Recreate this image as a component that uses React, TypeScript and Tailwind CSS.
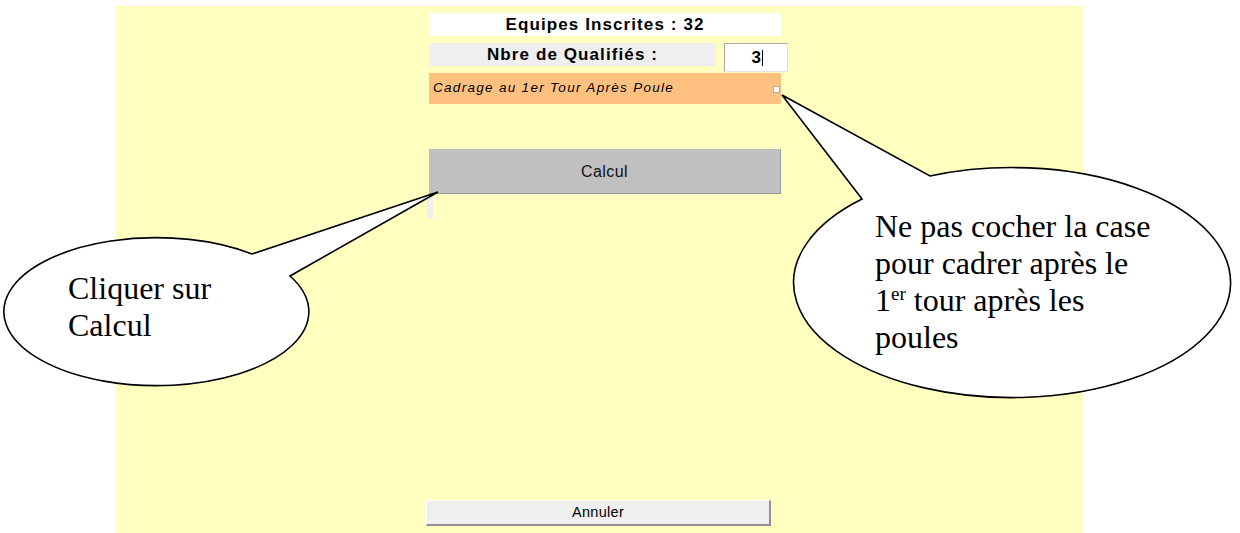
import React from "react";

const ui = { fontFamily: '"Liberation Sans", Arial, sans-serif' };
const serif = { fontFamily: '"Liberation Serif", "Times New Roman", serif' };

export default function App() {
  return (
    <div className="relative w-[1240px] h-[533px] bg-white overflow-hidden" style={ui}>
      <div className="ml-[115px] mt-[6px] w-[968px] h-[527px] bg-[#ffffc0] flex flex-col pl-[314px] pt-[7px] pb-[7px]">
        <div className="w-[352px] h-[23px] bg-white flex items-center justify-center text-[17px] font-bold tracking-[1.1px] text-black">
          Equipes Inscrites : 32
        </div>
        <div className="mt-[7px] flex items-start gap-[8px]">
          <div className="w-[287px] h-[23px] bg-[#efefef] flex items-center justify-center text-[17px] font-bold tracking-[1.1px] text-black">
            Nbre de Qualifiés :
          </div>
          <div className="w-[64px] h-[29px] bg-white border-t border-l border-[#a8a8a8] border-r-[#e4e4e4] border-b-[#e4e4e4] border-r border-b flex items-center justify-end pr-[24px]">
            <span className="text-[17px] font-bold leading-none">3</span>
            <span className="ml-[1px] w-[1px] h-[16px] bg-black" />
          </div>
        </div>
        <div className="mt-[1px] w-[352px] h-[31px] bg-[#ffc080] flex items-center pl-[4px] pr-[1px]">
          <span className="italic text-[13.5px] tracking-[1.3px] text-black">Cadrage au 1er Tour Après Poule</span>
          <span className="ml-auto mt-[1px] w-[7px] h-[7px] bg-white border border-[#b0b0b0]" />
        </div>
        <div className="mt-[45px] w-[352px] h-[45px] bg-[#c0c0c0] border-b border-r border-[#9a9a9a] flex items-center justify-center pt-[2px] text-[16px] tracking-[0.4px] text-[#111]">
          Calcul
        </div>
        <div className="-ml-[2px] w-[6px] h-[24px] bg-[#efefef]" />
        <div className="mt-auto -ml-[3px] w-[345px] h-[26px] bg-[#efefef] border-t border-l border-white border-r-[#909090] border-b-[#909090] border-r-2 border-b-2 flex items-center justify-center text-[14.5px] tracking-[0.3px] text-black">
          Annuler
        </div>
      </div>

      <svg className="absolute left-0 top-0" width="1240" height="533" viewBox="0 0 1240 533">
        <path
          d="M 252 254 A 152.5 74 0 1 0 290 276 L 438 192 Z"
          fill="white"
          stroke="black"
          strokeWidth="1.6"
          strokeLinejoin="miter"
        />
        <path
          d="M 930 176 A 218.5 115 0 1 1 862 199 L 782 95 Z"
          fill="white"
          stroke="black"
          strokeWidth="1.6"
          strokeLinejoin="miter"
        />
      </svg>

      <div className="absolute left-[68px] top-[270px] text-[32px] leading-[37px] text-black" style={serif}>
        <div>Cliquer sur</div>
        <div>Calcul</div>
      </div>
      <div className="absolute left-[875px] top-[208px] text-[32px] leading-[37px] text-black" style={serif}>
        <div>Ne pas cocher la case</div>
        <div>pour cadrer après le</div>
        <div>
          1<span className="inline-block align-top text-[19px] leading-[19px] mt-[2px]">er</span> tour après les
        </div>
        <div>poules</div>
      </div>
    </div>
  );
}
